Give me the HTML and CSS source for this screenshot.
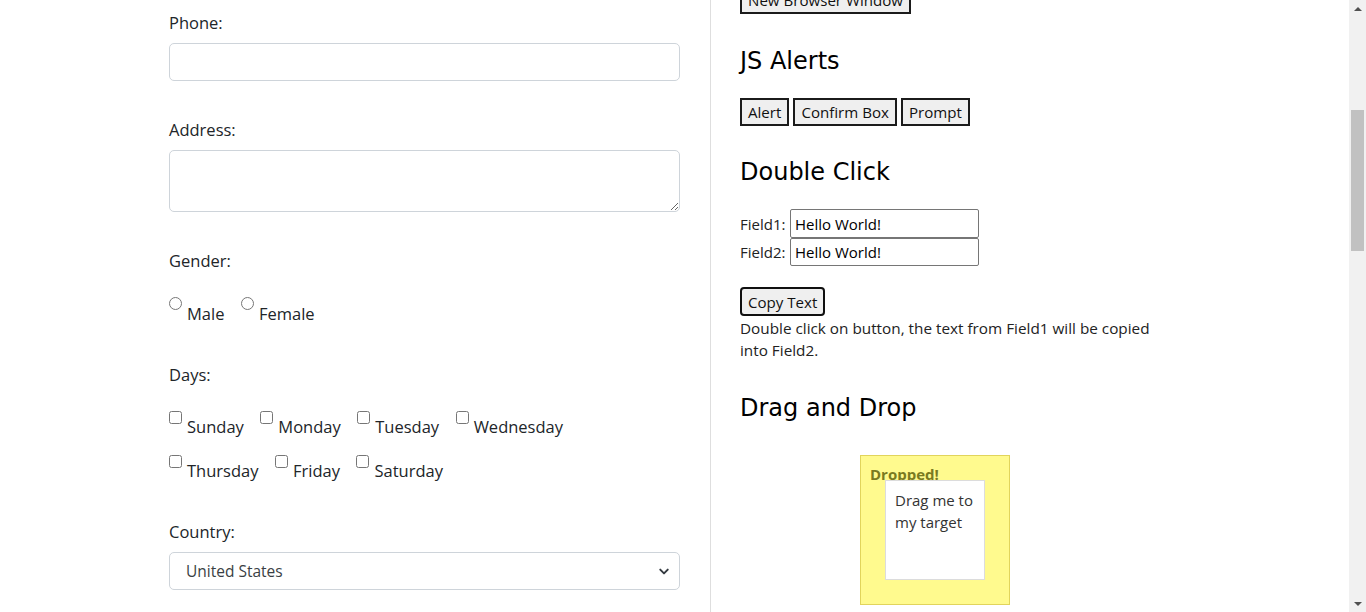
FILE: index.html
```html
<!DOCTYPE html>
<html lang="en">
<head>
<meta charset="utf-8">
<title>Automation Testing Practice</title>
<link rel="stylesheet" href="styles.css">
</head>
<body>
<div class="window">
  <div class="viewport">
    <div class="left">
      <div class="group">
        <label class="lbl" for="phone">Phone:</label>
        <input class="fc" id="phone" type="text">
      </div>
      <div class="group">
        <label class="lbl" for="address">Address:</label>
        <textarea class="fc ta" id="address"></textarea>
      </div>
      <div class="group">
        <div class="lbl lbl-opts">Gender:</div>
        <div class="opt-row">
          <label class="opt"><input type="radio" name="gender"><span>Male</span></label>
          <label class="opt"><input type="radio" name="gender"><span>Female</span></label>
        </div>
      </div>
      <div class="group days">
        <div class="lbl lbl-opts">Days:</div>
        <div class="opt-row">
          <label class="opt cb"><input type="checkbox"><span>Sunday</span></label>
          <label class="opt cb"><input type="checkbox"><span>Monday</span></label>
          <label class="opt cb"><input type="checkbox"><span>Tuesday</span></label>
          <label class="opt cb"><input type="checkbox"><span>Wednesday</span></label>
        </div>
        <div class="opt-row row2">
          <label class="opt cb"><input type="checkbox"><span>Thursday</span></label>
          <label class="opt cb"><input type="checkbox"><span>Friday</span></label>
          <label class="opt cb"><input type="checkbox"><span>Saturday</span></label>
        </div>
      </div>
      <div class="group">
        <label class="lbl" for="country">Country:</label>
        <div class="select-wrap">
          <select class="fc sel" id="country">
            <option>United States</option>
            <option>Canada</option>
            <option>United Kingdom</option>
          </select>
          <svg class="chev" width="12" height="9" viewBox="0 0 16 12"><path d="M3 3.5l5 5 5-5" fill="none" stroke="#343a40" stroke-width="2.6" stroke-linecap="round" stroke-linejoin="round"/></svg>
        </div>
      </div>
    </div>

    <div class="divider"></div>

    <div class="right">
      <button class="btn btn-top">New Browser Window</button>

      <h2 class="h">JS Alerts</h2>
      <div class="btn-row">
        <button class="btn">Alert</button>
        <button class="btn">Confirm Box</button>
        <button class="btn">Prompt</button>
      </div>

      <h2 class="h">Double Click</h2>
      <div class="field"><span class="flabel">Field1:</span><input class="tf" type="text" value="Hello World!"></div>
      <div class="field f2"><span class="flabel">Field2:</span><input class="tf" type="text" value="Hello World!"></div>
      <button class="btn btn-copy">Copy Text</button>
      <p class="desc">Double click on button, the text from Field1 will be copied into Field2.</p>

      <h2 class="h h-dd">Drag and Drop</h2>
      <div class="dd">
        <div class="drop">
          <p class="dropped">Dropped!</p>
          <div class="drag">Drag me to my target</div>
        </div>
      </div>
    </div>
  </div>

  <div class="scrollbar">
    <div class="arrow up"></div>
    <div class="track"><div class="thumb"></div></div>
    <div class="arrow down"></div>
  </div>
</div>
</body>
</html>
```

FILE: styles.css
```css
html, body {
  margin: 0;
  padding: 0;
  height: 612px;
  overflow: hidden;
  background: #fff;
}

.window {
  display: flex;
  width: 1366px;
  height: 612px;
}

.viewport {
  flex: 1;
  display: flex;
  align-items: stretch;
  padding-left: 169px;
  overflow: hidden;
  font-family: "Open Sans", "Liberation Sans", sans-serif;
  font-size: 16px;
  color: #212529;
}

/* ---------- left form ---------- */
.left {
  width: 511px;
  padding-top: 11px;
  font-size: 16.5px;
}

.group {
  margin-bottom: 37px;
}

.group.days {
  margin-bottom: 36px;
}

.lbl {
  display: block;
  line-height: 24px;
  margin-bottom: 8px;
}

.lbl-opts {
  margin-bottom: 24px;
}

.fc {
  display: block;
  box-sizing: border-box;
  width: 100%;
  height: 38px;
  margin: 0;
  border: 1px solid #ced4da;
  border-radius: 5px;
  background: #fff;
  font-family: inherit;
  font-size: 16px;
  color: #212529;
  padding: 6px 12px;
  outline: none;
}

.ta {
  height: 62px;
  resize: vertical;
}

.opt-row {
  display: flex;
  gap: 16.5px;
  height: 29px;
}

.row2 {
  margin-top: 15px;
}

.opt {
  display: flex;
  align-items: flex-start;
  gap: 5px;
}

.opt input {
  margin: 0;
  width: 13px;
  height: 13px;
  flex: none;
}

.opt span {
  line-height: 24px;
  padding-top: 5px;
}

.opt.cb span {
  padding-top: 4px;
}

.select-wrap {
  position: relative;
}

.sel {
  appearance: none;
  -webkit-appearance: none;
  padding: 6px 36px 6px 16px;
  color: #3a3f44;
  font-size: 15.5px;
}

.chev {
  position: absolute;
  right: 10px;
  top: 15px;
  pointer-events: none;
}

/* ---------- divider ---------- */
.divider {
  width: 1px;
  margin-left: 30px;
  background: #dedede;
  flex: none;
}

/* ---------- right column ---------- */
.right {
  width: 425px;
  padding-left: 29px;
  color: #222;
}

.h {
  font-family: "DejaVu Sans", Verdana, sans-serif;
  font-weight: normal;
  font-size: 24px;
  line-height: 28px;
  color: #000;
  margin: 32px 0 23px;
}

.btn {
  box-sizing: border-box;
  height: 28px;
  padding: 0 6px;
  margin: 0;
  border: 2px solid #1b1b1b;
  border-radius: 0;
  background: #efefef;
  font-family: "Open Sans", "Liberation Sans", sans-serif;
  font-size: 15.1px;
  color: #111;
  line-height: 24px;
  white-space: nowrap;
}

.btn-top {
  display: block;
  margin-top: -14px;
  width: 171px;
}

.btn-top + .h {
  margin-top: 33px;
}

.btn-row {
  display: flex;
  gap: 4px;
}

.field {
  display: flex;
  align-items: center;
  height: 29px;
}

.f2 {
  height: 28px;
}

.flabel {
  width: 50px;
  font-size: 15px;
}

.tf {
  box-sizing: border-box;
  width: 189px;
  height: 100%;
  margin: 0;
  border: 1px solid #767676;
  border-radius: 2px;
  padding: 0 4px;
  font-family: "Open Sans", "Liberation Sans", sans-serif;
  font-size: 15px;
  color: #000;
}

.btn-copy {
  display: block;
  margin-top: 21px;
  height: 29px;
  border-color: #101010;
  border-radius: 4px;
}

.desc {
  margin: 0;
  padding-top: 1px;
  font-size: 15.3px;
  line-height: 22px;
}

.h-dd {
  margin-top: 33px;
}

.dd {
  margin-top: 33px;
  padding-left: 120px;
}

.drop {
  position: relative;
  box-sizing: border-box;
  width: 150px;
  height: 150px;
  background: #fffa8e;
  border: 1px solid #e1d45c;
  padding: 7px 9px;
}

.dropped {
  margin: 0;
  font-weight: bold;
  font-size: 15px;
  line-height: 22px;
  color: #7a7a21;
}

.drag {
  position: absolute;
  left: 24px;
  top: 24px;
  box-sizing: border-box;
  width: 100px;
  height: 100px;
  background: #fff;
  border: 1px solid #dcdcdc;
  padding: 8px 9px;
  font-size: 15px;
  line-height: 22px;
  color: #333;
}

/* ---------- fake scrollbar ---------- */
.scrollbar {
  width: 17px;
  flex: none;
  background: #f1f1f1;
  display: flex;
  flex-direction: column;
}

.arrow {
  height: 17px;
  display: flex;
  align-items: center;
  justify-content: center;
  flex: none;
}

.arrow::before {
  content: "";
  width: 0;
  height: 0;
  border-left: 4px solid transparent;
  border-right: 4px solid transparent;
}

.up::before {
  border-bottom: 4px solid #505050;
}

.down::before {
  border-top: 4px solid #505050;
}

.track {
  flex: 1;
  padding-top: 93px;
}

.thumb {
  margin: 0 2px;
  height: 141px;
  background: #c1c1c1;
}
```
